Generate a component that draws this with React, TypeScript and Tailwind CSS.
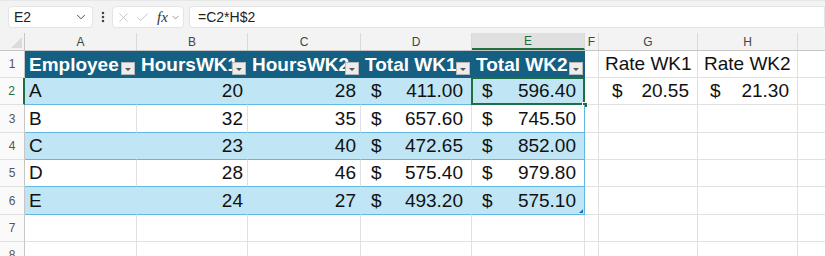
import React from "react";
import { ChevronDown, EllipsisVertical, X, Check } from "lucide-react";

const W = [
  "w-[25px]",
  "w-[112px]",
  "w-[111px]",
  "w-[113px]",
  "w-[111px]",
  "w-[113px]",
  "w-[14px]",
  "w-[99px]",
  "w-[100px]",
  "w-[31px]",
];
const LETTERS = ["", "A", "B", "C", "D", "E", "F", "G", "H", ""];
const RH = ["h-[27px]", "h-[27px]", "h-[28px]", "h-[27px]", "h-[27px]", "h-[28px]", "h-[27px]", "h-[27px]"];

const DATA: [string, number, number, string, string][] = [
  ["A", 20, 28, "411.00", "596.40"],
  ["B", 32, 35, "657.60", "745.50"],
  ["C", 23, 40, "472.65", "852.00"],
  ["D", 28, 46, "575.40", "979.80"],
  ["E", 24, 27, "493.20", "575.10"],
];

const font = { fontFamily: '"Liberation Sans", Arial, sans-serif' };

function FilterBtn() {
  return (
    <div className="absolute right-[2px] bottom-[3px] w-[14px] h-[13px] bg-[#ececec] border border-[#b8b8b8] flex items-end justify-center pb-[3px]">
      <div className="w-0 h-0 border-l-[3px] border-r-[3px] border-t-[3px] border-l-transparent border-r-transparent border-t-[#555]" />
    </div>
  );
}

function RowHeader({ n, h, active }: { n: number; h: string; active?: boolean }) {
  return (
    <div
      className={`${W[0]} ${h} shrink-0 flex items-center justify-center text-[12px] bg-[#fafafa] border-b border-[#e1e1e1] ${
        active ? "text-[#1e6e42] border-r-2 border-r-[#1e6e42]" : "text-[#555] border-r border-r-[#c6c6c6]"
      }`}
    >
      {n}
    </div>
  );
}

function Money({ v }: { v: string }) {
  return (
    <div className="flex w-full items-center justify-between pl-[10px] pr-[8px]">
      <span>$</span>
      <span>{v}</span>
    </div>
  );
}

export default function App() {
  return (
    <div className="w-[825px] h-[256px] overflow-hidden bg-white text-[#111]" style={font}>
      {/* Toolbar */}
      <div className="h-[33px] bg-[#f3f3f3] border-t border-[#e6e6e6] flex items-start pt-[5px] pl-[8px] gap-0">
        <div className="w-[85px] h-[22px] bg-white rounded-[4px] border border-[#e4e4e4] flex items-center justify-between pl-[5px] pr-[4px] text-[14px] text-[#222]">
          <span>E2</span>
          <ChevronDown size={14} strokeWidth={1.6} className="text-[#444]" />
        </div>
        <div className="w-[19px] h-[22px] flex items-center justify-center">
          <EllipsisVertical size={14} strokeWidth={2.4} className="text-[#444]" />
        </div>
        <div className="w-[72px] h-[22px] bg-white rounded-[4px] border border-[#e4e4e4] flex items-center pl-[3px] gap-[4px]">
          <X size={15} strokeWidth={1.3} className="text-[#bdbdbd]" />
          <Check size={15} strokeWidth={1.3} className="text-[#bdbdbd]" />
          <span
            className="ml-[3px] text-[15px] italic text-[#333] leading-none"
            style={{ fontFamily: '"Liberation Serif", "Times New Roman", serif' }}
          >
            fx
          </span>
          <ChevronDown size={11} strokeWidth={1.6} className="text-[#777] -ml-[2px]" />
        </div>
        <div className="ml-[5px] flex-1 h-[22px] bg-white rounded-l-[4px] border border-[#e4e4e4] flex items-center pl-[8px] text-[14px] text-[#222]">
          =C2*H$2
        </div>
      </div>

      {/* Column headers */}
      <div className="flex h-[18px] bg-[#f3f3f3] border-b border-[#c6c6c6]">
        {LETTERS.map((l, i) => (
          <div
            key={i}
            className={`${W[i]} shrink-0 relative flex items-center justify-center text-[12px] ${
              i === 0 ? "border-r border-[#c6c6c6]" : "border-r border-[#dadada]"
            } ${i === 5 ? "bg-[#e0e0e0] text-[#1e6e42] border-b-2 border-b-[#1e6e42]" : "text-[#444]"}`}
          >
            {i === 0 ? (
              <div className="absolute right-[2px] bottom-[2px] w-0 h-0 border-l-[11px] border-t-[11px] border-l-transparent border-t-transparent border-b-0 border-r-0" style={{}}>
                <div className="absolute -right-[0px] -bottom-[0px]" />
              </div>
            ) : (
              l
            )}
            {i === 0 && (
              <div className="absolute right-[2px] bottom-[2px] w-0 h-0 border-b-[11px] border-l-[11px] border-l-transparent border-b-[#dcdcdc]" />
            )}
          </div>
        ))}
      </div>

      {/* Row 1: table header */}
      <div className="flex text-[19px]">
        <RowHeader n={1} h={RH[0]} />
        {["Employee", "HoursWK1", "HoursWK2", "Total WK1", "Total WK2"].map((t, i) => (
          <div
            key={t}
            className={`${W[i + 1]} ${RH[0]} shrink-0 relative overflow-hidden bg-[#156082] text-white font-bold flex items-center pl-[4px] whitespace-nowrap pt-[1px]`}
          >
            {t}
            <FilterBtn />
          </div>
        ))}
        <div className={`${W[6]} ${RH[0]} shrink-0 border-r border-b border-[#e1e1e1]`} />
        <div className={`${W[7]} ${RH[0]} shrink-0 border-r border-b border-[#e1e1e1] flex items-center pl-[6px] whitespace-nowrap`}>
          Rate WK1
        </div>
        <div className={`${W[8]} ${RH[0]} shrink-0 border-r border-b border-[#e1e1e1] flex items-center pl-[6px] whitespace-nowrap`}>
          Rate WK2
        </div>
        <div className={`${W[9]} ${RH[0]} shrink-0 border-b border-[#e1e1e1]`} />
      </div>

      {/* Table data rows */}
      {DATA.map((r, ri) => {
        const band = ri % 2 === 0;
        const h = RH[ri + 1];
        const bg = band ? "bg-[#c0e6f5]" : "bg-white";
        const vr = band ? "border-r border-r-[#c0e6f5]" : "border-r border-r-[#e1e1e1]";
        const cell = `shrink-0 ${h} ${bg} border-b border-b-[#61b8e3] flex items-center pt-[1px]`;
        return (
          <div key={ri} className="flex text-[19px]">
            <RowHeader n={ri + 2} h={h} active={ri === 0} />
            <div className={`${W[1]} ${cell} ${vr} pl-[4px]`}>{r[0]}</div>
            <div className={`${W[2]} ${cell} ${vr} justify-end pr-[4px]`}>{r[1]}</div>
            <div className={`${W[3]} ${cell} ${vr} justify-end pr-[4px]`}>{r[2]}</div>
            <div className={`${W[4]} ${cell} ${vr}`}>
              <Money v={r[3]} />
            </div>
            <div className={`${W[5]} ${cell} border-r border-r-[#61b8e3] relative`}>
              <Money v={r[4]} />
              {ri === 0 && (
                <>
                  <div className="absolute -left-[1px] -top-[1px] -right-[1px] -bottom-[1px] border-2 border-[#1e6e42] pointer-events-none" />
                  <div className="absolute -right-[4px] -bottom-[4px] w-[6px] h-[6px] bg-[#1e6e42] border border-white" />
                </>
              )}
              {ri === 4 && (
                <div className="absolute right-[1px] bottom-[1px] w-0 h-0 border-b-[4px] border-l-[4px] border-l-transparent border-b-[#2a6bb5]" />
              )}
            </div>
            <div className={`${W[6]} ${h} shrink-0 border-r border-b border-[#e1e1e1]`} />
            <div className={`${W[7]} ${h} shrink-0 border-r border-b border-[#e1e1e1] flex items-center pt-[1px]`}>
              {ri === 0 && (
                <div className="flex w-full justify-between pl-[13px] pr-[8px]">
                  <span>$</span>
                  <span>20.55</span>
                </div>
              )}
            </div>
            <div className={`${W[8]} ${h} shrink-0 border-r border-b border-[#e1e1e1] flex items-center pt-[1px]`}>
              {ri === 0 && (
                <div className="flex w-full justify-between pl-[12px] pr-[8px]">
                  <span>$</span>
                  <span>21.30</span>
                </div>
              )}
            </div>
            <div className={`${W[9]} ${h} shrink-0 border-b border-[#e1e1e1]`} />
          </div>
        );
      })}

      {/* Empty rows */}
      {[7, 8].map((n, k) => {
        const h = RH[6 + k];
        return (
          <div key={n} className="flex">
            <RowHeader n={n} h={h} />
            {W.slice(1).map((w, i) => (
              <div key={i} className={`${w} ${h} shrink-0 border-r border-b border-[#e1e1e1]`} />
            ))}
          </div>
        );
      })}
    </div>
  );
}
